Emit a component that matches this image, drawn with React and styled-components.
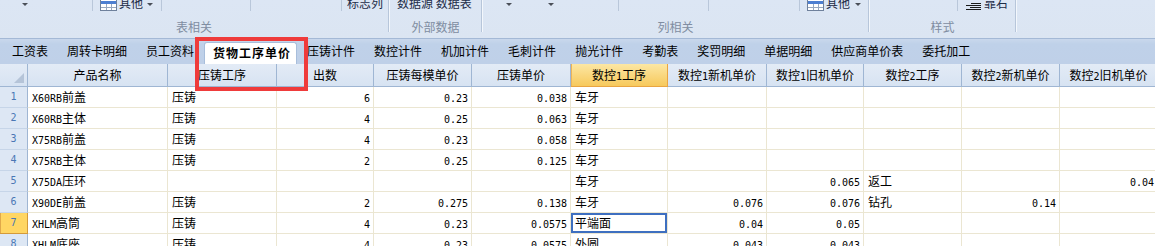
import React from 'react';
import styled, { createGlobalStyle, css } from 'styled-components';

const Global = createGlobalStyle`
  html, body { margin: 0; padding: 0; background: #fff; }
  body {
    width: 1155px; height: 246px; overflow: hidden;
    font-family: "Noto Sans CJK SC", "Noto Sans", sans-serif;
    font-size: 12px; color: #000;
  }
`;

const Page = styled.div`
  position: relative;
  width: 1155px;
  height: 246px;
  overflow: hidden;
`;

/* ---------- Ribbon ---------- */
const Ribbon = styled.div`
  display: flex;
  height: 38px;
  background: linear-gradient(#dce6f4, #dbe5f2);
  border-bottom: 1px solid #a4b9d6;
  overflow: hidden;
`;

const Group = styled.div`
  width: ${p => p.$w}px;
  flex: none;
  display: flex;
  flex-direction: column;
`;

const GroupSep = styled.div`
  width: 1px;
  height: 32px;
  flex: none;
  background: #b7c6da;
  box-shadow: 1px 0 0 #f3f7fc;
  margin-right: 1px;
`;

const Controls = styled.div`
  display: flex;
  align-items: center;
  height: 16px;
  margin-top: -5px;
`;

const Slot = styled.div`
  width: ${p => p.$w}px;
  flex: none;
  display: flex;
  align-items: center;
  gap: ${p => p.$gap ?? 2}px;
  padding-left: ${p => p.$pl ?? 0}px;
  box-sizing: border-box;
  height: 16px;
`;

const ShortSep = styled.div`
  width: 1px;
  height: 16px;
  flex: none;
  background: #b9c7da;
  align-self: flex-start;
`;

const RibbonText = styled.span`
  color: #1d2c47;
  font-size: 12px;
  line-height: 16px;
  white-space: nowrap;
`;

const Arrow = styled.span`
  width: 0;
  height: 0;
  flex: none;
  border-left: 3px solid transparent;
  border-right: 3px solid transparent;
  border-top: 3px solid #4a4f58;
  margin-left: ${p => p.$ml ?? 0}px;
  margin-top: 3px;
`;

const GroupLabel = styled.div`
  margin-top: auto;
  height: 14px;
  line-height: 14px;
  padding-bottom: 4px;
  text-align: center;
  color: #808da1;
  font-size: 12px;
  white-space: nowrap;
`;

const TableIcon = () => (
  <svg width="17" height="16" viewBox="0 0 17 16" style={{ flex: 'none' }}>
    <rect x="0.5" y="0.5" width="16" height="15" fill="#fff" stroke="#6f819c" />
    <rect x="1" y="6" width="15" height="3" fill="#4d7fd1" />
    <line x1="1" y1="12.5" x2="16" y2="12.5" stroke="#98a8bf" />
    <line x1="6.5" y1="9" x2="6.5" y2="15" stroke="#98a8bf" />
    <line x1="11.5" y1="9" x2="11.5" y2="15" stroke="#98a8bf" />
  </svg>
);

const AlignRightIcon = () => (
  <svg width="16" height="16" viewBox="0 0 16 16" style={{ flex: 'none' }}>
    <g stroke="#1a1a1a" strokeWidth="1">
      <line x1="6" y1="8.5" x2="16" y2="8.5" />
      <line x1="1" y1="10.5" x2="16" y2="10.5" />
      <line x1="5" y1="12.5" x2="16" y2="12.5" />
      <line x1="1" y1="14.5" x2="16" y2="14.5" />
    </g>
  </svg>
);

/* ---------- Tabs ---------- */
const TabBar = styled.div`
  display: flex;
  align-items: flex-end;
  height: 25px;
  background: linear-gradient(#c9d8ec, #bfd1e9 20%, #bfd0e8);
  padding-left: 3px;
  gap: 1px;
`;

const Tab = styled.div`
  height: 25px;
  line-height: 23px;
  padding: 0 9px;
  font-size: 12px;
  white-space: nowrap;
  color: #000;
  box-sizing: border-box;
  ${p => p.$active && css`
    height: 22px;
    line-height: 19px;
    background: #fff;
    font-weight: bold;
    letter-spacing: 1px;
    padding: 0 5px 0 8px;
    border: 1px solid #a8bedb;
    border-bottom: none;
    border-radius: 3px 3px 0 0;
  `}
`;

/* ---------- Sheet ---------- */
const Sheet = styled.div`
  display: grid;
  grid-template-columns: 28px 140px 109px 97px 98px 99px 97px 99px 97px 98px 98px 98px;
  width: max-content;
`;

const ColHead = styled.div`
  height: 23px;
  line-height: 22px;
  box-sizing: border-box;
  border-right: 1px solid #9fb6d3;
  border-bottom: 1px solid #9fb6d3;
  background: linear-gradient(#e3ebf6, #d7e3f2);
  text-align: center;
  white-space: nowrap;
  overflow: hidden;
  position: relative;
  ${p => p.$hot && css`
    background: linear-gradient(#fce7a4, #f7c95c);
    border-right-color: #e9a542;
    border-bottom-color: #e9a542;
    box-shadow: inset 1px 0 0 #eeb558;
  `}
`;

const Corner = styled(ColHead)`
  &::after {
    content: '';
    position: absolute;
    right: 3px;
    bottom: 3px;
    width: 0;
    height: 0;
    border-left: 10px solid transparent;
    border-bottom: 10px solid #b5c4d8;
  }
`;

const RowHead = styled.div`
  height: 21px;
  line-height: 20px;
  box-sizing: border-box;
  border-right: 1px solid #9fb6d3;
  border-bottom: 1px solid #c6d5e8;
  background: #dde7f4;
  text-align: center;
  color: #4a77b4;
  font-family: "DejaVu Sans Mono", monospace;
  font-size: 10px;
  ${p => p.$hot && css`
    background: #ffd663;
    border-right-color: #d49a3a;
    border-bottom-color: #d49a3a;
    box-shadow: inset 1px 0 0 #e0a94a;
  `}
`;

const Cell = styled.div`
  height: 21px;
  line-height: 20px;
  box-sizing: border-box;
  border-right: 1px solid #ebe6d2;
  border-bottom: 1px solid #ebe6d2;
  padding: 0 3px 0 4px;
  text-align: ${p => (p.$right ? 'right' : 'left')};
  white-space: nowrap;
  overflow: hidden;
  ${p => p.$selected && css`
    box-shadow: inset 0 0 0 2px #3e6fc0;
  `}
`;

const Lat = styled.span`
  font-family: "DejaVu Sans Mono", monospace;
  font-size: 10px;
`;

const Han = styled.span`
  font-family: "Noto Sans CJK SC", sans-serif;
  font-size: 12px;
`;

const Mixed = ({ text }) =>
  String(text)
    .split(/([\x20-\x7e]+)/)
    .filter(Boolean)
    .map((s, i) =>
      /^[\x20-\x7e]+$/.test(s) ? <Lat key={i}>{s}</Lat> : <Han key={i}>{s}</Han>
    );

const Marker = styled.div`
  position: absolute;
  left: 195px;
  top: 37px;
  width: 113px;
  height: 54px;
  box-sizing: border-box;
  border: 4px solid #ef3b3b;
  pointer-events: none;
`;

const tabs = ['工资表', '周转卡明细', '员工资料', '货物工序单价', '压铸计件', '数控计件', '机加计件', '毛刺计件', '抛光计件', '考勤表', '奖罚明细', '单据明细', '供应商单价表', '委托加工'];

const headers = ['产品名称', '压铸工序', '出数', '压铸每模单价', '压铸单价', '数控1工序', '数控1新机单价', '数控1旧机单价', '数控2工序', '数控2新机单价', '数控2旧机单价'];
const rightCols = [false, false, true, true, true, false, true, true, false, true, true];

const rows = [
  ['X60RB前盖', '压铸', '6', '0.23', '0.038', '车牙', '', '', '', '', ''],
  ['X60RB主体', '压铸', '4', '0.25', '0.063', '车牙', '', '', '', '', ''],
  ['X75RB前盖', '压铸', '4', '0.23', '0.058', '车牙', '', '', '', '', ''],
  ['X75RB主体', '压铸', '2', '0.25', '0.125', '车牙', '', '', '', '', ''],
  ['X75DA压环', '', '', '', '', '车牙', '', '0.065', '返工', '', '0.04 '],
  ['X90DE前盖', '压铸', '2', '0.275', '0.138', '车牙', '0.076', '0.076', '钻孔', '0.14', ''],
  ['XHLM高筒', '压铸', '4', '0.23', '0.0575', '平端面', '0.04', '0.05', '', '', ''],
  ['XHLM底座', '压铸', '4', '0.23', '0.0575', '外圆', '0.043', '0.043', '', '', ''],
];

export default function App() {
  return (
    <Page>
      <Global />
      <Ribbon>
        <Group $w={388}>
          <Controls>
            <Slot $w={92} $pl={22}><Arrow /></Slot>
            <ShortSep />
            <Slot $w={68} $pl={7} $gap={2}>
              <TableIcon />
              <RibbonText>其他</RibbonText>
              <Arrow $ml={2} />
            </Slot>
            <ShortSep />
            <Slot $w={88} />
            <ShortSep />
            <Slot $w={90} />
            <ShortSep />
            <Slot $w={46} $pl={5}><RibbonText>标志列</RibbonText></Slot>
          </Controls>
          <GroupLabel>表相关</GroupLabel>
        </Group>
        <GroupSep />
        <Group $w={91}>
          <Controls>
            <Slot $w={91} $pl={7}><RibbonText>数据源 数据表</RibbonText></Slot>
          </Controls>
          <GroupLabel>外部数据</GroupLabel>
        </Group>
        <GroupSep />
        <Group $w={385}>
          <Controls>
            <Slot $w={135} $pl={23} $gap={0}>
              <Arrow />
              <Arrow $ml={36} />
            </Slot>
            <ShortSep />
            <Slot $w={89} />
            <ShortSep />
            <Slot $w={90} />
            <ShortSep />
            <Slot $w={68} $pl={7} $gap={2}>
              <TableIcon />
              <RibbonText>其他</RibbonText>
              <Arrow $ml={3} />
            </Slot>
          </Controls>
          <GroupLabel>列相关</GroupLabel>
        </Group>
        <GroupSep />
        <Group $w={145}>
          <Controls>
            <Slot $w={87} />
            <ShortSep />
            <Slot $w={57} $pl={7} $gap={3}>
              <AlignRightIcon />
              <RibbonText>靠右</RibbonText>
            </Slot>
          </Controls>
          <GroupLabel>样式</GroupLabel>
        </Group>
        <GroupSep />
      </Ribbon>

      <TabBar>
        {tabs.map((t, i) => (
          <Tab key={t} $active={i === 3}>{t}</Tab>
        ))}
      </TabBar>

      <Sheet>
        <Corner />
        {headers.map((h, i) => (
          <ColHead key={h} $hot={i === 5}><Mixed text={h} /></ColHead>
        ))}
        {rows.map((r, ri) => (
          <React.Fragment key={ri}>
            <RowHead $hot={ri === 6}>{ri + 1}</RowHead>
            {r.map((v, ci) => (
              <Cell key={ci} $right={rightCols[ci]} $selected={ri === 6 && ci === 5}>
                {v ? <Mixed text={v.trim()} /> : null}
              </Cell>
            ))}
          </React.Fragment>
        ))}
      </Sheet>

      <Marker />
    </Page>
  );
}
